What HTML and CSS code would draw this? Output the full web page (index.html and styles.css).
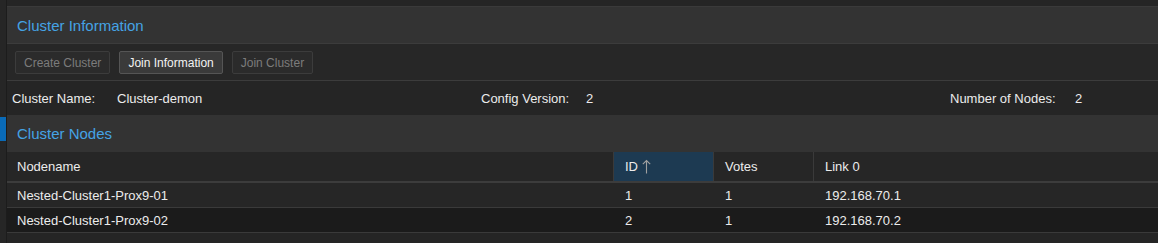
FILE: index.html
```html
<!DOCTYPE html>
<html>
<head>
<meta charset="utf-8">
<link rel="stylesheet" href="styles.css">
</head>
<body>
<div class="app">
  <div class="sidebar"><div class="marker"></div></div>
  <div class="main">
    <section class="panel">
      <div class="panel-title">Cluster Information</div>
      <div class="toolbar">
        <button class="btn disabled">Create Cluster</button>
        <button class="btn active">Join Information</button>
        <button class="btn disabled">Join Cluster</button>
      </div>
      <div class="info">
        <div class="field"><span class="label">Cluster Name:</span><span class="value">Cluster-demon</span></div>
        <div class="field"><span class="label">Config Version:</span><span class="value">2</span></div>
        <div class="field wide"><span class="label">Number of Nodes:</span><span class="value">2</span></div>
      </div>
    </section>
    <section class="panel">
      <div class="panel-title tall">Cluster Nodes</div>
      <div class="grid">
        <div class="row head">
          <div class="cell">Nodename</div>
          <div class="cell sorted">ID <svg class="sort" width="9" height="15" viewBox="0 0 9 15"><path d="M4.5 1.5V14.5M0.8 5.2L4.5 1.5L8.2 5.2" fill="none" stroke="#a0a0a0" stroke-width="1.1"/></svg></div>
          <div class="cell">Votes</div>
          <div class="cell last">Link 0</div>
        </div>
        <div class="row">
          <div class="cell">Nested-Cluster1-Prox9-01</div>
          <div class="cell">1</div>
          <div class="cell">1</div>
          <div class="cell last">192.168.70.1</div>
        </div>
        <div class="row alt">
          <div class="cell">Nested-Cluster1-Prox9-02</div>
          <div class="cell">2</div>
          <div class="cell">1</div>
          <div class="cell last">192.168.70.2</div>
        </div>
      </div>
    </section>
  </div>
</div>
</body>
</html>
```
FILE: styles.css
```css
* { box-sizing: border-box; }
html, body {
  margin: 0;
  padding: 0;
  background: #252525;
  font-family: "Liberation Sans", Arial, sans-serif;
  font-size: 13px;
  color: #ececec;
  overflow: hidden;
}
.app {
  display: flex;
  height: 243px;
  padding-top: 6px;
}
.sidebar {
  width: 7px;
  flex: none;
  background: #262626;
  border-right: 1px solid #1c1c1c;
  margin-top: -6px;
  padding-top: 117px;
}
.marker {
  width: 6px;
  height: 24px;
  background: #0a6bb8;
}
.main {
  flex: 1;
  border-top: 1px solid #3a3a3a;
  background: #252525;
  min-width: 0;
}
.panel-title {
  height: 36px;
  background: #333333;
  color: #45a3e5;
  font-size: 15px;
  display: flex;
  align-items: center;
  padding-left: 10px;
}
.panel-title.tall { height: 37px; }
.toolbar {
  height: 38px;
  border-top: 1px solid #3c3c3c;
  border-bottom: 1px solid #3c3c3c;
  background: #272727;
  display: flex;
  align-items: center;
  gap: 9px;
  padding: 0 8px;
}
.btn {
  font-family: "Liberation Sans", Arial, sans-serif;
  font-size: 12px;
  height: 23px;
  padding: 0 8px;
  border-radius: 2px;
  border: 1px solid #3c3c3c;
  background: #2b2b2b;
  color: #7c7c7c;
  margin-top: 1px;
}
.btn.active {
  background: #3a3a3a;
  border-color: #555555;
  color: #f2f2f2;
}
.info {
  height: 34px;
  background: #252525;
  display: grid;
  grid-template-columns: 469px 469px 1fr;
  align-items: center;
  padding-left: 5px;
}
.field { display: flex; white-space: nowrap; }
.label { width: 105px; flex: none; }
.field.wide .label { width: 125px; }
.grid { background: #252525; }
.row {
  display: grid;
  grid-template-columns: 607px 100px 100px 1fr;
  height: 25px;
  border-bottom: 1px solid #3a3a3a;
  background: #262626;
}
.row.alt { background: #1b1b1b; }
.row.head {
  height: 31px;
  border-bottom: 2px solid #3c3c3c;
  background: #262626;
}
.cell {
  display: flex;
  align-items: center;
  padding-left: 10px;
  white-space: nowrap;
}
.row.head .cell { border-right: 1px solid #3a3a3a; padding-left: 10px; }
.row.head .cell.last { border-right: none; }
.row.head .cell.sorted { background: #1d3a52; padding-left: 11px; }
.row .cell:nth-child(n+2) { padding-left: 11px; }
.sort { margin-left: 4px; margin-top: -1px; }
```
